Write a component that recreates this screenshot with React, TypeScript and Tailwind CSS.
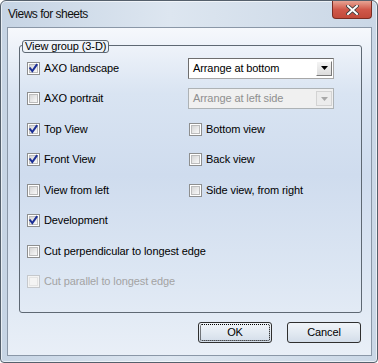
import React from "react";

type CheckProps = { checked?: boolean; disabled?: boolean };

const Check = ({ checked, disabled }: CheckProps) => (
  <span
    className={`relative block w-[13px] h-[13px] shrink-0 border p-[1px] ${
      disabled ? "border-[#c5c8cc] bg-[#f4f4f4]" : "border-[#8e8f8f] bg-white"
    }`}
  >
    <span
      className={`block w-full h-full border ${
        disabled
          ? "border-[#e4e4e4] bg-[#f4f4f4]"
          : "border-[#bcbcbc] bg-gradient-to-br from-[#d6d6d6] to-[#f9f9f9]"
      }`}
    />
    {checked && (
      <svg className="absolute left-0 top-0" width="11" height="11" viewBox="0 0 11 11">
        <path d="M2.2 5.3 L4.3 8 L8.6 1.9" fill="none" stroke="#1b2f96" strokeWidth="2" strokeLinecap="square" />
      </svg>
    )}
  </span>
);

type RowProps = { label: string; checked?: boolean; disabled?: boolean; className?: string };

const CheckRow = ({ label, checked, disabled, className = "" }: RowProps) => (
  <div className={`flex items-center gap-[4px] ${className}`}>
    <Check checked={checked} disabled={disabled} />
    <span className={`tracking-[-0.1px] whitespace-nowrap ${disabled ? "text-[#a3a3a3]" : "text-black"}`}>{label}</span>
  </div>
);

const Combo = ({ value, disabled }: { value: string; disabled?: boolean }) => (
  <div
    className={`flex items-center w-[146px] h-[21px] border ${
      disabled
        ? "border-[#adb2b5] bg-[#f0f0f0] text-[#8f8f8f]"
        : "border-t-[#6e6e6e] border-l-[#6e6e6e] border-r-[#a7a7a7] border-b-[#a7a7a7] bg-white text-black"
    }`}
  >
    <span className="pl-[4px] tracking-[-0.1px] whitespace-nowrap">{value}</span>
    <span
      className={`ml-auto mr-[1px] flex items-center justify-center w-[16px] h-[15px] border ${
        disabled
          ? "border-[#d3d3d3] bg-[#ececec]"
          : "border-t-white border-l-white border-r-[#7a7a7a] border-b-[#7a7a7a] bg-gradient-to-b from-[#f5f5f5] to-[#dcdcdc]"
      }`}
    >
      <svg width="7" height="4" viewBox="0 0 7 4">
        <path d="M0 0 H7 L3.5 4 Z" fill={disabled ? "#a8a8a8" : "#000"} />
      </svg>
    </span>
  </div>
);

const Button = ({ label, focused }: { label: string; focused?: boolean }) => (
  <button className="relative w-[74px] h-[21px] rounded-[3px] border border-[#2f2f2f] bg-gradient-to-b from-[#f0f4f9] via-[#e3eaf2] to-[#d3dde9] text-black tracking-[-0.1px]">
    {focused && <span className="absolute inset-[1px] rounded-[2px] border border-dotted border-black" />}
    <span className="relative">{label}</span>
  </button>
);

export default function App() {
  return (
    <div className="w-[378px] h-[363px] bg-white font-['Liberation_Sans',Arial,sans-serif] text-[11px] leading-none">
      <div className="relative w-full h-full flex flex-col rounded-t-[6px] rounded-b-[4px] border border-[#55606c] bg-[linear-gradient(to_right,#c6d4e4,#dde6f0_45%,#cad7e6)] shadow-[inset_0_0_0_1px_rgba(255,255,255,0.6)]">
        {/* title bar */}
        <div className="flex h-[26px] shrink-0">
          <span className="pl-[7px] pt-[7px] text-[12px] tracking-[-0.5px] text-[#101010]">Views for sheets</span>
          <span className="ml-auto mr-[5px] flex items-center justify-center w-[40px] h-[18px] rounded-b-[4px] border border-t-0 border-[#7a2c22] bg-gradient-to-b from-[#e7a394] via-[#d0584a] to-[#c24a3a]">
            <svg width="13" height="10" viewBox="0 0 13 10">
              <path d="M2 1 L11 9 M11 1 L2 9" stroke="#3b3b3b" strokeWidth="3.6" strokeLinecap="square" />
              <path d="M2 1 L11 9 M11 1 L2 9" stroke="#ffffff" strokeWidth="2" strokeLinecap="square" />
            </svg>
          </span>
        </div>

        {/* client area */}
        <div className="ml-[6px] w-[365px] h-[329px] border border-[#8a97a7] bg-[linear-gradient(to_bottom,#f6f8fc,#d9e4f2_20%,#cfdcee_45%,#dce6f3_75%,#e9eff7)] flex flex-col">
          <div className="relative ml-[11px] mr-[9px] mt-[17px] h-[268px] rounded-[3px] border border-[#5e6873] pl-[7px] pt-[7px]">
            <span className="absolute left-[2px] top-[-6px] h-[13px] px-[2px] rounded-[3px] border border-[#5e6873] bg-[#eef3f9] flex items-center tracking-[-0.1px] text-black">
              View group (3-D)
            </span>

            <div className="grid grid-cols-[161px_1fr] auto-rows-[30.5px] items-center">
              <CheckRow label="AXO landscape" checked />
              <Combo value="Arrange at bottom" />

              <CheckRow label="AXO portrait" />
              <Combo value="Arrange at left side" disabled />

              <CheckRow label="Top View" checked />
              <CheckRow label="Bottom view" className="ml-[1px]" />

              <CheckRow label="Front View" checked />
              <CheckRow label="Back view" className="ml-[1px]" />

              <CheckRow label="View from left" />
              <CheckRow label="Side view, from right" className="ml-[1px]" />

              <CheckRow label="Development" checked className="col-span-2" />
              <CheckRow label="Cut perpendicular to longest edge" className="col-span-2" />
              <CheckRow label="Cut parallel to longest edge" disabled className="col-span-2" />
            </div>
          </div>

          <div className="flex justify-end gap-[15px] pr-[10px] mt-[9px]">
            <Button label="OK" focused />
            <Button label="Cancel" />
          </div>
        </div>
      </div>
    </div>
  );
}
